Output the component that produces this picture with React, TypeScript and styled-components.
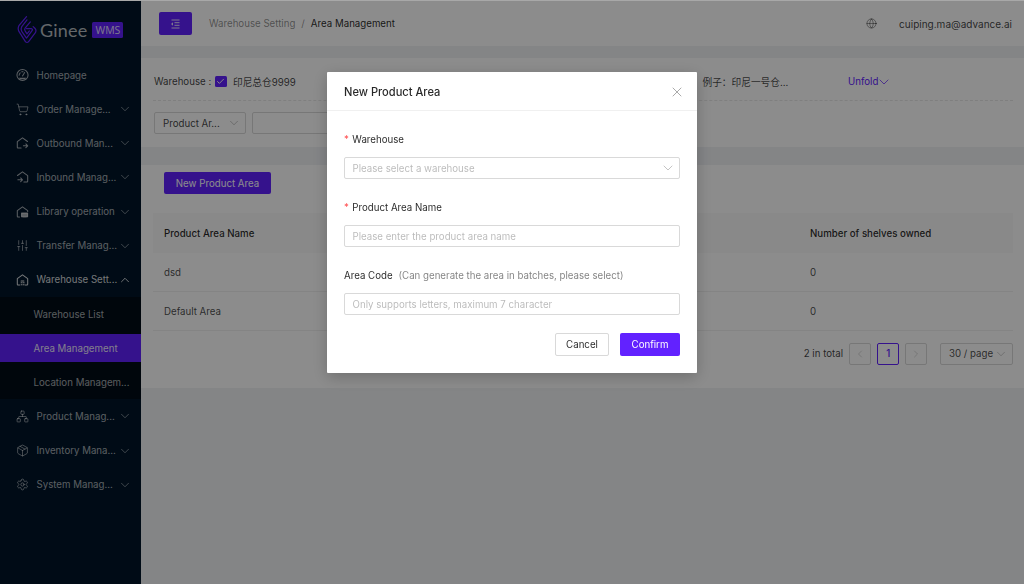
import React from 'react';
import styled, { createGlobalStyle } from 'styled-components';
import {
  Check,
  ChevronDown,
  ChevronLeft,
  ChevronRight,
  ChevronUp,
  Globe,
  Network,
  Package,
  Settings,
  ShoppingCart,
  SlidersVertical,
  X,
} from 'lucide-react';

const GlobalStyle = createGlobalStyle`
  html, body {
    margin: 0;
    padding: 0;
    height: 100%;
    background: #a8a8a8;
    overflow: hidden;
  }
  * { box-sizing: border-box; }
  body {
    font-family: Inter, "Noto Sans CJK SC", "Liberation Sans", sans-serif;
    font-size: 9.7px;
    color: rgba(0, 0, 0, 0.85);
  }
`;

const Shell = styled.div`
  display: flex;
  width: 1024px;
  height: 583px;
  margin-top: 1px;
  overflow: hidden;
`;

const Sidebar = styled.aside`
  width: 141px;
  flex-shrink: 0;
  background: #001529;
  color: rgba(255, 255, 255, 0.65);
`;

const LogoRow = styled.div`
  display: flex;
  align-items: center;
  height: 57px;
  padding: 0 0 0 17px;
`;

const LogoWord = styled.span`
  margin-left: 3px;
  font-family: Lato, sans-serif;
  font-size: 18px;
  letter-spacing: 0.2px;
  color: rgba(255, 255, 255, 0.72);
`;

const LogoBadge = styled.span`
  margin-left: 5px;
  padding: 0 3px;
  height: 16px;
  line-height: 16px;
  border-radius: 1.5px;
  background: #6222ff;
  font-family: "Open Sans", sans-serif;
  font-size: 10.5px;
  color: rgba(255, 255, 255, 0.85);
`;

const MenuRow = styled.div<{ $open?: boolean }>`
  display: flex;
  align-items: center;
  height: 34.15px;
  padding: 0 9px 0 16px;
  gap: 7.5px;
  color: ${(p) => (p.$open ? 'rgba(255, 255, 255, 0.85)' : 'rgba(255, 255, 255, 0.65)')};
`;

const MenuIcon = styled.span`
  display: flex;
  width: 13px;
  height: 14px;
  flex-shrink: 0;
  align-items: center;
  justify-content: center;
`;

const MenuLabel = styled.span`
  flex: 1;
  min-width: 0;
  white-space: nowrap;
`;

const SubMenu = styled.div`
  display: flex;
  flex-direction: column;
  gap: 6px;
  padding: 3px 0;
  background: #000c17;
`;

const SubRow = styled.div<{ $active?: boolean }>`
  display: flex;
  align-items: center;
  height: 28.15px;
  padding-left: 33.5px;
  white-space: nowrap;
  background: ${(p) => (p.$active ? '#6222ff' : 'transparent')};
  color: ${(p) => (p.$active ? 'rgba(255, 255, 255, 0.9)' : 'rgba(255, 255, 255, 0.65)')};
`;

const Main = styled.main`
  flex: 1;
  min-width: 0;
  background: #f0f2f5;
`;

const Header = styled.header`
  display: flex;
  align-items: center;
  height: 45px;
  padding: 0 12px 0 18px;
  background: #fff;
`;

const ToggleButton = styled.div`
  display: flex;
  align-items: center;
  justify-content: center;
  width: 33px;
  height: 23px;
  border-radius: 2px;
  background: #6222ff;
`;

const Crumbs = styled.div`
  display: flex;
  margin-left: 17px;
  gap: 6px;
  flex: 1;
`;

const CrumbMuted = styled.span`
  color: rgba(0, 0, 0, 0.45);
`;

const HeaderUser = styled.span`
  margin-left: 22px;
  font-size: 10px;
  color: rgba(0, 0, 0, 0.75);
`;

const FilterCard = styled.section`
  height: 89px;
  margin-top: 12px;
  padding: 0 11px 0 12px;
  background: #fff;
`;

const FilterTop = styled.div`
  display: flex;
  align-items: center;
  height: 43px;
  padding: 5px 0 0 1px;
  border-bottom: 1px dashed #e8e8e8;
`;

const FilterLabel = styled.span`
  width: 61px;
  color: rgba(0, 0, 0, 0.75);
`;

const Tick = styled.span`
  display: flex;
  width: 11.5px;
  height: 11.5px;
  align-items: center;
  justify-content: center;
  border-radius: 1.5px;
  background: #6222ff;
`;

const WarehouseName = styled.span`
  margin-left: 6.5px;
  width: 469.5px;
  color: rgba(0, 0, 0, 0.75);
`;

const Example = styled.span`
  width: 145.5px;
  color: rgba(0, 0, 0, 0.75);
`;

const UnfoldLink = styled.span`
  display: flex;
  align-items: center;
  color: #6222ff;

  svg {
    margin-left: -2px;
  }
`;

const FilterBottom = styled.div`
  display: flex;
  gap: 6px;
  padding-top: 11px;
  padding-left: 1px;
`;

const FilterSelect = styled.div`
  display: flex;
  align-items: center;
  justify-content: space-between;
  width: 92px;
  height: 22.4px;
  padding: 0 4px 0 8px;
  border: 1px solid #d9d9d9;
  border-radius: 2px;
  color: rgba(0, 0, 0, 0.75);
`;

const FilterInput = styled.div`
  width: 90px;
  height: 22.4px;
  border: 1px solid #d9d9d9;
  border-radius: 2px;
`;

const TableCard = styled.section`
  height: 223px;
  margin-top: 18px;
  padding: 7px 11px 0 12px;
  background: #fff;
`;

const PrimaryButton = styled.div`
  display: inline-flex;
  align-items: center;
  justify-content: center;
  height: 22.4px;
  border-radius: 2px;
  background: #6222ff;
  color: #fff;
`;

const AddButton = styled(PrimaryButton)`
  width: 107px;
  margin-left: 11px;
`;

const TableHead = styled.div`
  display: grid;
  grid-template-columns: 1fr 214px;
  align-items: center;
  height: 40px;
  margin-top: 18.6px;
  background: #fafafa;
  font-weight: 500;
  color: rgba(0, 0, 0, 0.85);
`;

const TableRow = styled.div`
  display: grid;
  grid-template-columns: 1fr 214px;
  align-items: center;
  height: 39px;
  border-bottom: 1px solid #f0f0f0;
  color: rgba(0, 0, 0, 0.72);
`;

const Cell = styled.div`
  padding: 1px 0 0 11px;
`;

const Pagination = styled.div`
  display: flex;
  align-items: center;
  justify-content: flex-end;
  height: 22.4px;
  margin-top: 11.6px;
`;

const PagerTotal = styled.span`
  margin-right: 6px;
  color: rgba(0, 0, 0, 0.75);
`;

const PagerItem = styled.div<{ $active?: boolean }>`
  display: flex;
  align-items: center;
  justify-content: center;
  width: 22.4px;
  height: 22.4px;
  margin-right: 5.6px;
  border: 1px solid ${(p) => (p.$active ? '#6222ff' : '#d9d9d9')};
  border-radius: 2px;
  color: ${(p) => (p.$active ? '#6222ff' : 'rgba(0, 0, 0, 0.25)')};
  font-weight: 500;
`;

const PageSize = styled.div`
  display: flex;
  align-items: center;
  justify-content: space-between;
  width: 73px;
  height: 22.4px;
  margin-left: 7px;
  padding: 0 4px 0 8px;
  border: 1px solid #d9d9d9;
  border-radius: 2px;
  white-space: nowrap;
  color: rgba(0, 0, 0, 0.72);
`;

const Mask = styled.div`
  position: fixed;
  inset: 1px 0 0 0;
  display: flex;
  justify-content: center;
  align-items: flex-start;
  padding-top: 71px;
  background: rgba(0, 0, 0, 0.45);
`;

const Modal = styled.div`
  width: 370px;
  height: 301px;
  background: #fff;
  border-radius: 1px;
  box-shadow: 0 4px 16px rgba(0, 0, 0, 0.22);
`;

const ModalHead = styled.div`
  display: flex;
  align-items: center;
  justify-content: space-between;
  height: 39px;
  padding: 1px 12px 0 17px;
  border-bottom: 1px solid #f0f0f0;
`;

const ModalTitle = styled.span`
  font-size: 11.1px;
  font-weight: 500;
`;

const ModalBody = styled.div`
  padding: 17px 17px 0;
`;

const FormItem = styled.div`
  margin-bottom: 16.6px;
`;

const FormLabel = styled.div`
  display: flex;
  align-items: center;
  height: 22px;
  margin-bottom: 7px;
  padding-top: 0.8px;
  white-space: nowrap;
`;

const Required = styled.span`
  margin-right: 3.5px;
  color: #ff4d4f;
`;

const Hint = styled.span`
  margin-left: 6px;
  color: rgba(0, 0, 0, 0.5);
`;

const Field = styled.div`
  display: flex;
  align-items: center;
  justify-content: space-between;
  height: 22.4px;
  padding: 0 3px 0 7.5px;
  border: 1px solid #d9d9d9;
  border-radius: 2px;
  color: rgba(0, 0, 0, 0.28);
`;

const ModalFooter = styled.div`
  display: flex;
  justify-content: flex-end;
  gap: 11px;
  margin-top: 18px;
`;

const CancelButton = styled.div`
  display: flex;
  align-items: center;
  justify-content: center;
  width: 54px;
  height: 22.4px;
  border: 1px solid #d9d9d9;
  border-radius: 2px;
`;

const ConfirmButton = styled(PrimaryButton)`
  width: 60px;
`;

const GaugeIcon = () => (
  <svg width="14" height="14" viewBox="0 0 14 14" fill="none" stroke="currentColor" strokeWidth="1.1" strokeLinecap="round">
    <circle cx="7" cy="7" r="6" />
    <path d="M7 8 9.3 4.4M3.4 7.2a3.6 3.6 0 0 1 1.2-2.4M6.2 3.4h1.4" />
    <path d="M3.2 10h7.6l-.9 1.6H4.1z" fill="currentColor" stroke="none" />
  </svg>
);

const HouseIcon = ({ kind }: { kind: 'out' | 'in' | 'lib' | 'home' }) => (
  <svg width="14" height="14" viewBox="0 0 14 14" fill="none" stroke="currentColor" strokeWidth="1.1" strokeLinecap="round" strokeLinejoin="round">
    {kind === 'out' && (
      <>
        <path d="M5.5 12.5H2.2a.8.8 0 0 1-.8-.8V5.6L7 1.5l5.4 3.9" />
        <path d="M8 10h4.5M10.6 8l2 2-2 2" />
      </>
    )}
    {kind === 'in' && (
      <>
        <path d="M8.5 12.5h3.3a.8.8 0 0 0 .8-.8V5.6L7 1.5 1.6 5.4" />
        <path d="M2 10h5M5 8l2 2-2 2" />
      </>
    )}
    {kind === 'lib' && (
      <>
        <path d="M3.8 12.5H2.2a.8.8 0 0 1-.8-.8V5.6L7 1.5l5.6 4v1" />
        <path d="M6 8h6.5v4H6zM7.5 12.5h3.5" fill="currentColor" />
      </>
    )}
    {kind === 'home' && (
      <>
        <path d="M4 12.5H2.2a.8.8 0 0 1-.8-.8V5.6L7 1.5l5.6 4v6.2a.8.8 0 0 1-.8.8H10" />
        <path d="M5.5 8h3M5.5 10h1M7.8 10h1M5.5 12h1M7.8 12h1" />
      </>
    )}
  </svg>
);

const LogoMark = () => (
  <svg width="20" height="29" viewBox="0 0 21 30" fill="none" stroke="#6222ff" strokeWidth="1.3" strokeLinejoin="round" strokeLinecap="round">
    <path d="M10 1.5 L2 11 Q0.5 14 2 17 L9 28 Q10.5 29.2 12 28 L19.5 18 Q20.5 15.5 19 14 L17 12" />
    <path d="M10.5 5 L5 12 Q3.5 14.5 5 17 L10 24 L16 16 Q16.8 14.6 15 14 L10 14" />
    <path d="M14 7 L8.5 13.5 Q7.6 15 8.5 16.5 L10.5 19.5 L13 16.5" />
  </svg>
);

const ToggleIcon = () => (
  <svg width="11" height="10" viewBox="0 0 11 10" fill="none" stroke="#fff" strokeOpacity="0.85" strokeWidth="1">
    <path d="M1.5 1h8M4.5 3.7h5M4.5 6.3h5M1.5 9h8" />
    <path d="M3 3.2 1 5l2 1.8z" fill="#fff" fillOpacity="0.85" stroke="none" />
  </svg>
);

const menuTop = [
  { label: 'Homepage', icon: <GaugeIcon />, arrow: false },
  { label: 'Order Manage...', icon: <ShoppingCart size={15} strokeWidth={1.4} />, arrow: true },
  { label: 'Outbound Man...', icon: <HouseIcon kind="out" />, arrow: true },
  { label: 'Inbound Manag...', icon: <HouseIcon kind="in" />, arrow: true },
  { label: 'Library operation', icon: <HouseIcon kind="lib" />, arrow: true },
  { label: 'Transfer Manag...', icon: <SlidersVertical size={15} strokeWidth={1.4} />, arrow: true },
];

const menuBottom = [
  { label: 'Product Manag...', icon: <Network size={15} strokeWidth={1.4} /> },
  { label: 'Inventory Mana...', icon: <Package size={15} strokeWidth={1.4} /> },
  { label: 'System Manag...', icon: <Settings size={15} strokeWidth={1.4} /> },
];

export default function App() {
  return (
    <>
      <GlobalStyle />
      <Shell>
        <Sidebar>
          <LogoRow>
            <LogoMark />
            <LogoWord>Ginee</LogoWord>
            <LogoBadge>WMS</LogoBadge>
          </LogoRow>
          {menuTop.map((item) => (
            <MenuRow key={item.label}>
              <MenuIcon>{item.icon}</MenuIcon>
              <MenuLabel>{item.label}</MenuLabel>
              {item.arrow && <ChevronDown size={14} strokeWidth={1.2} />}
            </MenuRow>
          ))}
          <MenuRow $open>
            <MenuIcon>
              <HouseIcon kind="home" />
            </MenuIcon>
            <MenuLabel>Warehouse Sett...</MenuLabel>
            <ChevronUp size={14} strokeWidth={1.6} />
          </MenuRow>
          <SubMenu>
            <SubRow>Warehouse List</SubRow>
            <SubRow $active>Area Management</SubRow>
            <SubRow>Location Managem...</SubRow>
          </SubMenu>
          {menuBottom.map((item) => (
            <MenuRow key={item.label}>
              <MenuIcon>{item.icon}</MenuIcon>
              <MenuLabel>{item.label}</MenuLabel>
              <ChevronDown size={14} strokeWidth={1.2} />
            </MenuRow>
          ))}
        </Sidebar>
        <Main>
          <Header>
            <ToggleButton>
              <ToggleIcon />
            </ToggleButton>
            <Crumbs>
              <CrumbMuted>Warehouse Setting</CrumbMuted>
              <CrumbMuted>/</CrumbMuted>
              <span>Area Management</span>
            </Crumbs>
            <Globe size={11} strokeWidth={1.2} color="rgba(0,0,0,0.7)" />
            <HeaderUser>cuiping.ma@advance.ai</HeaderUser>
          </Header>
          <FilterCard>
            <FilterTop>
              <FilterLabel>Warehouse :</FilterLabel>
              <Tick>
                <Check size={9} strokeWidth={2.5} color="#fff" />
              </Tick>
              <WarehouseName>印尼总仓9999</WarehouseName>
              <Example>例子：印尼一号仓...</Example>
              <UnfoldLink>
                Unfold
                <ChevronDown size={16} strokeWidth={1.1} />
              </UnfoldLink>
            </FilterTop>
            <FilterBottom>
              <FilterSelect>
                Product Ar...
                <ChevronDown size={14} strokeWidth={1} color="rgba(0,0,0,0.4)" />
              </FilterSelect>
              <FilterInput />
            </FilterBottom>
          </FilterCard>
          <TableCard>
            <AddButton>New Product Area</AddButton>
            <TableHead>
              <Cell>Product Area Name</Cell>
              <Cell>Number of shelves owned</Cell>
            </TableHead>
            <TableRow>
              <Cell>dsd</Cell>
              <Cell>0</Cell>
            </TableRow>
            <TableRow>
              <Cell>Default Area</Cell>
              <Cell>0</Cell>
            </TableRow>
            <Pagination>
              <PagerTotal>2 in total</PagerTotal>
              <PagerItem>
                <ChevronLeft size={12} strokeWidth={1.2} />
              </PagerItem>
              <PagerItem $active>1</PagerItem>
              <PagerItem>
                <ChevronRight size={12} strokeWidth={1.2} />
              </PagerItem>
              <PageSize>
                30 / page
                <ChevronDown size={14} strokeWidth={1} color="rgba(0,0,0,0.35)" />
              </PageSize>
            </Pagination>
          </TableCard>
        </Main>
      </Shell>
      <Mask>
        <Modal>
          <ModalHead>
            <ModalTitle>New Product Area</ModalTitle>
            <X size={16} strokeWidth={1} color="rgba(0,0,0,0.5)" />
          </ModalHead>
          <ModalBody>
            <FormItem>
              <FormLabel>
                <Required>*</Required>Warehouse
              </FormLabel>
              <Field>
                Please select a warehouse
                <ChevronDown size={16} strokeWidth={1} color="rgba(0,0,0,0.35)" />
              </Field>
            </FormItem>
            <FormItem>
              <FormLabel>
                <Required>*</Required>Product Area Name
              </FormLabel>
              <Field>Please enter the product area name</Field>
            </FormItem>
            <FormItem>
              <FormLabel>
                Area Code
                <Hint>(Can generate the area in batches, please select)</Hint>
              </FormLabel>
              <Field>Only supports letters, maximum 7 character</Field>
            </FormItem>
            <ModalFooter>
              <CancelButton>Cancel</CancelButton>
              <ConfirmButton>Confirm</ConfirmButton>
            </ModalFooter>
          </ModalBody>
        </Modal>
      </Mask>
    </>
  );
}
